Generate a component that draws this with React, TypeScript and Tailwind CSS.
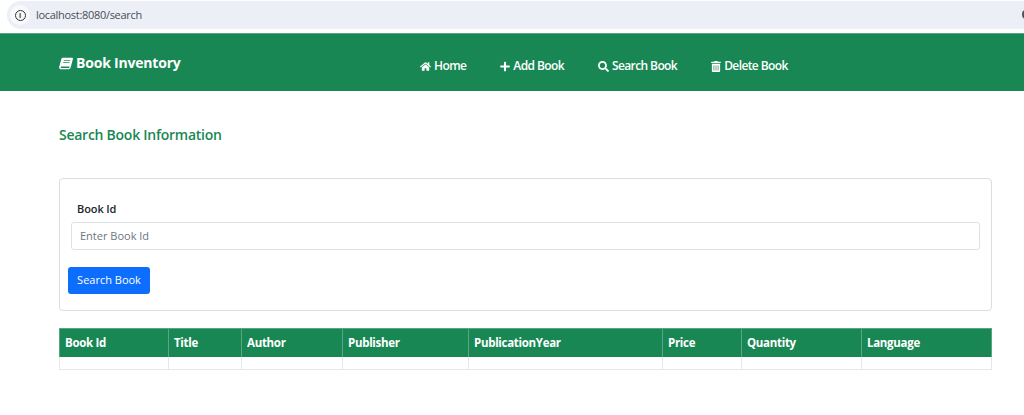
import { FaHome, FaPlus, FaSearch, FaTrashAlt } from 'react-icons/fa'

const columns = [
  { name: 'Book Id', width: 'w-[110px]' },
  { name: 'Title', width: 'w-[73px]' },
  { name: 'Author', width: 'w-[101px]' },
  { name: 'Publisher', width: 'w-[126px]' },
  { name: 'PublicationYear', width: 'w-[194px]' },
  { name: 'Price', width: 'w-[79px]' },
  { name: 'Quantity', width: 'w-[120px]' },
  { name: 'Language', width: 'w-[130px]' },
]

function BookIcon() {
  return (
    <svg viewBox="0 0 16 14" className="w-[14px] h-[13px] mr-[3px]" fill="#fff">
      <path d="M4.2 0.3H15C15.8 0.3 16.1 1 15.9 1.8L13.4 11.4C13.1 12.6 12.4 13.6 10.9 13.6H2.4C1 13.6 0 12.6 0.2 11.1C0.3 10.4 0.6 9.4 0.9 8.5L2.8 1.5C3 0.7 3.5 0.3 4.2 0.3ZM5.6 2.9L5.3 3.9H12.6L12.9 2.9ZM4.9 5.2L4.6 6.2H11.9L12.2 5.2ZM2.6 10.5C2.2 10.5 1.9 10.9 1.9 11.3C1.9 11.8 2.2 12.1 2.8 12.1H11.2C11.5 12.1 11.8 11.9 11.9 11.5L12.2 10.5Z" fillRule="evenodd" />
    </svg>
  )
}

function NavLink({ icon, label }: { icon: React.ReactNode; label: string }) {
  return (
    <a className="flex items-center gap-[3px] text-white font-semibold text-[12px] tracking-[-0.6px] whitespace-nowrap">
      {icon}
      {label}
    </a>
  )
}

export default function App() {
  return (
    <div className="h-[415px] bg-white overflow-hidden font-['Open_Sans','Noto_Sans',sans-serif]">
      <div className="h-[33px] bg-white flex items-start pl-[7px]">
        <div className="flex-1 h-[28px] bg-[#edeff7] rounded-l-[14px] flex items-center pl-[3px] gap-[6px] relative top-px overflow-hidden">
          <div className="w-[20px] h-[20px] rounded-full bg-[#f8f9fd] flex items-center justify-center">
            <div className="w-[11px] h-[11px] rounded-full border-[1.5px] border-[#333] flex items-center justify-center text-[7px] font-bold text-[#333] leading-none">i</div>
          </div>
          <span className="text-[11px] tracking-[-0.3px] text-[#4a4d55]">localhost:8080/search</span>
          <div className="absolute right-[-6px] top-[9px] w-[8px] h-[9px] rounded-full border-2 border-[#555]" />
        </div>
      </div>

      <nav className="h-[58px] bg-[#198754] border-t border-[#5aa583] flex items-start">
        <div className="w-[361px] pl-[59px] pt-[19px] flex items-center text-white font-bold text-[14px] tracking-[-0.2px] leading-[20px]">
          <BookIcon />
          Book Inventory
        </div>
        <div className="flex items-center gap-[34px] pt-[23px] pl-[59px]">
          <NavLink icon={<FaHome className="w-[11px] h-[11px]" />} label="Home" />
          <NavLink icon={<FaPlus className="w-[10px] h-[11px]" />} label="Add Book" />
          <NavLink icon={<FaSearch className="w-[11px] h-[11px]" />} label="Search Book" />
          <NavLink icon={<FaTrashAlt className="w-[10px] h-[11px]" />} label="Delete Book" />
        </div>
      </nav>

      <main className="pl-[59px] w-[992px]">
        <h2 className="mt-[33px] text-[14px] leading-[22px] font-semibold tracking-[-0.26px] text-[#198754]">Search Book Information</h2>

        <div className="mt-[32px] h-[133px] border border-[#dcdde1] rounded-[4px] pt-[22px]">
          <label className="block pl-[17px] text-[11px] leading-[16px] font-semibold tracking-[-0.1px] text-[#212529]">Book Id</label>
          <input
            className="block ml-[11px] mt-[5px] w-[909px] h-[28px] border border-[#dee2e6] rounded-[3px] px-[8px] pb-[1px] text-[11px] outline-none placeholder:text-[#6c757d]"
            placeholder="Enter Book Id"
          />
          <button className="block ml-[8px] mt-[17px] w-[82px] h-[27px] bg-[#0d6efd] text-white text-[11px] rounded-[3px]">
            Search Book
          </button>
        </div>

        <table className="mt-[17px] w-[933px] table-fixed border-separate border-spacing-0">
          <thead>
            <tr className="bg-[#198754]">
              {columns.map(col => (
                <th key={col.name} className={`${col.width} h-[29px] border-t border-r first:border-l border-[#5aa583] px-[5px] text-left text-white text-[11.5px] tracking-[-0.3px] font-bold`}>
                  {col.name}
                </th>
              ))}
            </tr>
          </thead>
          <tbody>
            <tr>
              {columns.map(col => (
                <td key={col.name} className="h-[13px] border-r first:border-l border-b border-[#e6e7eb]" />
              ))}
            </tr>
          </tbody>
        </table>
      </main>
    </div>
  )
}
